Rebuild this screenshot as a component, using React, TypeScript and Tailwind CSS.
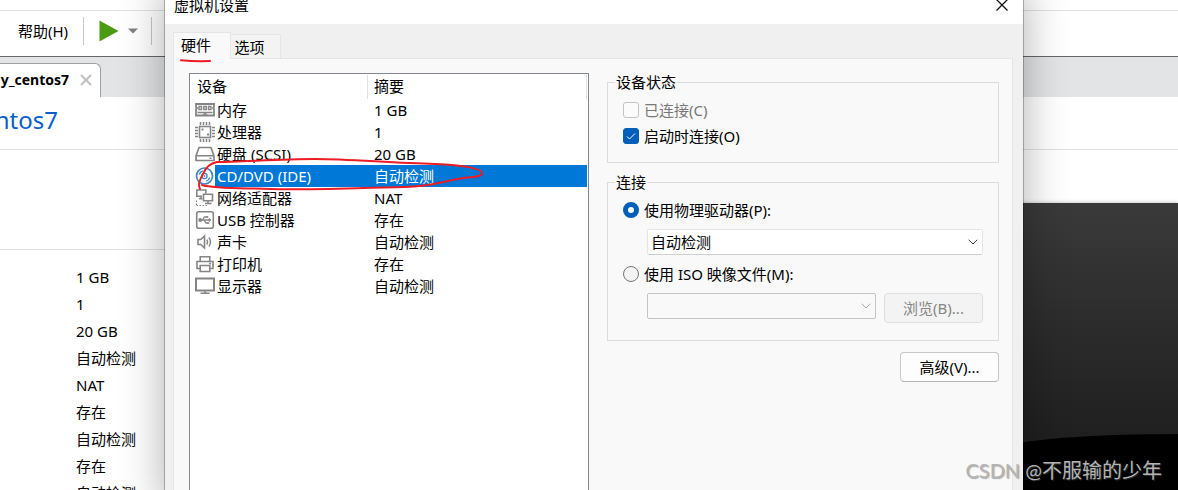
import React, { useState } from "react";
import { ChevronDown, X } from "lucide-react";

type Device = { name: string; summary: string; icon: React.ReactNode };

function Icon({ children, color = "#858585" }: { children: React.ReactNode; color?: string }) {
  return (
    <svg viewBox="0 0 20 20" className="h-5 w-5 shrink-0" fill="none" stroke={color} strokeWidth="1.6" aria-hidden="true">
      {children}
    </svg>
  );
}

const devices: Device[] = [
  {
    name: "内存",
    summary: "1 GB",
    icon: (
      <Icon>
        <path d="M1 4h18v3l-1 1 1 1v6.500H1V9l1-1-1-1z" strokeWidth="1.8" />
        <path d="M4 6.500h2.500v3H4zM8.800 6.500h2.500v3H8.800zM13.500 6.500H16v3h-2.500z" strokeWidth="1.400" />
        <path d="M2.500 12.500h15M8 15l2-1.500 2 1.500" strokeWidth="1.400" />
      </Icon>
    ),
  },
  {
    name: "处理器",
    summary: "1",
    icon: (
      <Icon>
        <rect x="4.500" y="4.500" width="11" height="11" />
        <path d="M5.500 0v3M8.500 0v3M11.500 0v3M14.500 0v3M5.500 17v3M8.500 17v3M11.500 17v3M14.500 17v3M0 5.500h3M0 8.500h3M0 11.500h3M0 14.500h3M17 5.500h3M17 8.500h3M17 11.500h3M17 14.500h3" strokeWidth="1.500" />
        <path d="M6.500 7.500h2M12 12.500h2" strokeWidth="2" />
      </Icon>
    ),
  },
  {
    name: "硬盘 (SCSI)",
    summary: "20 GB",
    icon: (
      <Icon>
        <path d="M4 3.500h12l3 8.500v4.500H1V12z" strokeLinejoin="round" strokeWidth="1.700" />
        <path d="M1 11.800h18M14.500 14.200h2" />
      </Icon>
    ),
  },
  {
    name: "CD/DVD (IDE)",
    summary: "自动检测",
    icon: (
      <Icon color="#3f87c0">
        <circle cx="9.500" cy="10" r="8" strokeWidth="1.700" />
        <circle cx="9.500" cy="10" r="2.600" strokeWidth="1.300" />
        <circle cx="9.500" cy="10" r=".5" fill="#3f87c0" strokeWidth="1" />
        <path d="M4.300 8.500a5.500 5.500 0 0 1 3.500-3.600M11.200 15.200a5.500 5.500 0 0 0 3.500-3.600" strokeWidth="1.400" />
      </Icon>
    ),
  },
  {
    name: "网络适配器",
    summary: "NAT",
    icon: (
      <Icon>
        <path d="M7 8.300H1.800V2h9v3.500M4 10.800h3.500M6 8.300v2.500" />
        <path d="M8.500 6.300h9v6.500h-9zM13 12.800v2.700M10 15.500h6.500" />
        <path d="M1.500 12.500v5.500M1.500 17.500h11" strokeDasharray="1.500 1.500" strokeWidth="1.200" />
      </Icon>
    ),
  },
  {
    name: "USB 控制器",
    summary: "存在",
    icon: (
      <Icon>
        <rect x="1.700" y="1.700" width="16.600" height="16.600" rx="2" />
        <path d="M5.500 10h9M7.500 10l2-3H12M9 10l2 3h2" strokeWidth="1.300" />
        <circle cx="5.200" cy="10" r="1.100" fill="#858585" />
        <path d="M14 8.500 16 10l-2 1.500zM11.500 6.500h1.500v1h-1.500zM12.500 12.500H14v1h-1.500z" fill="#858585" strokeWidth=".7" />
      </Icon>
    ),
  },
  {
    name: "声卡",
    summary: "自动检测",
    icon: (
      <Icon>
        <path d="M3 7.500h2.800L9.500 4v12l-3.700-3.500H3z" />
        <path d="M11.800 7.500q1.600 2.500 0 5M14 5.500q3 4.500 0 9" strokeWidth="1.400" />
      </Icon>
    ),
  },
  {
    name: "打印机",
    summary: "存在",
    icon: (
      <Icon>
        <path d="M5.200 7.500V2.800h9.600v4.700M5.200 14.500H2v-7h16v7h-3.200" />
        <path d="M5.200 11.500h9.600v6H5.200zM14 9.500h2" />
      </Icon>
    ),
  },
  {
    name: "显示器",
    summary: "自动检测",
    icon: (
      <Icon>
        <path d="M1 2.500h18v12H1z" strokeWidth="2" />
        <path d="M10 14.500V17M5.500 17.200h9" />
      </Icon>
    ),
  },
];

function MainWindow() {
  return (
    <div className="flex h-full flex-col bg-white">
      <div className="h-[11px] shrink-0 border-b border-[#e1e1e1]" />
      <div className="flex h-[46px] shrink-0 items-center border-b border-[#666] pb-1.5">
        <button type="button" className="ml-[18px] text-[15px] leading-5">帮助(H)</button>
        <div className="ml-[15px] h-7 w-px bg-[#c8c8c8]" />
        <button type="button" aria-label="启动" className="ml-[15px]">
          <svg viewBox="0 0 20 22" className="h-[22px] w-5"><path d="M.5.500 19.500 11 .5 21.500z" fill="#4b9a14" /></svg>
        </button>
        <button type="button" aria-label="电源选项" className="ml-[9px]">
          <svg viewBox="0 0 10 6" className="h-1.5 w-2.5"><path d="M0 .5h10L5 5.500z" fill="#808080" /></svg>
        </button>
        <div className="ml-[13px] h-7 w-px bg-[#c8c8c8]" />
      </div>
      <div className="flex h-10 shrink-0 items-end bg-[#e3e4e6]">
        <div className="flex h-[34px] w-[101px] items-center rounded-tr-md border-r border-t border-[#a0a0a0] bg-white pb-0.5">
          <div className="flex w-[69px] justify-end whitespace-nowrap text-sm font-bold leading-5">y_centos7</div>
          <button type="button" aria-label="关闭标签" className="ml-2 text-[#c0c0c0]">
            <X size={18} strokeWidth={2.5} />
          </button>
        </div>
      </div>
      <div className="flex h-[53px] shrink-0 items-center border-b border-[#e1e1e1] pb-1.5">
        <h1 className="flex w-[58px] justify-end whitespace-nowrap text-2xl leading-8 text-[#0b5fcb]">ntos7</h1>
      </div>
      <div className="flex min-h-0 flex-1">
        <div className="min-w-0 flex-1">
          <div className="h-[100px] border-b border-[#e1e1e1]" />
          <ul className="pl-[76px] pt-3.5 text-[15px] leading-[27px]">
            {devices.map((d) => (
              <li key={d.name}>{d.summary}</li>
            ))}
          </ul>
        </div>
        <div className="w-[200px] pt-[53px]">
          <div className="h-full bg-linear-to-b from-[#3a3a3a] to-[#1a1a1a] shadow-[0_0_4px_rgba(0,0,0,0.3)]">
            <svg viewBox="0 0 200 287" preserveAspectRatio="none" className="h-full w-full" aria-hidden="true">
              <path d="M0 247Q70 231 200 231V287H0z" fill="#000" />
            </svg>
          </div>
        </div>
      </div>
    </div>
  );
}

function DeviceTable() {
  return (
    <div className="w-[400px] shrink-0 border border-b-0 border-[#828790] bg-white pr-px">
      <table className="w-full table-fixed border-collapse text-left text-[15px] leading-[22px]">
        <thead>
          <tr>
            <th className="w-[178px] p-0 pt-px font-normal"><div className="h-6 border-r border-[#e0e0e0] pl-[7px]">设备</div></th>
            <th className="p-0 pt-px font-normal"><div className="h-6 border-r border-[#e0e0e0] pl-1.5">摘要</div></th>
          </tr>
        </thead>
        <tbody>
          {devices.map((d) => {
            const selected = d.name.startsWith("CD");
            return (
              <tr key={d.name} aria-selected={selected} className={selected ? "text-white" : "text-black"}>
                <td className="p-0">
                  <div className="flex h-[22px] items-center pl-[5px]">
                    {d.icon}
                    <span className={selected ? "h-[22px] flex-1 bg-[#0078d7] pl-0.5" : "h-[22px] flex-1 pl-0.5"}>{d.name}</span>
                  </div>
                </td>
                <td className={selected ? "bg-[#0078d7] p-0 pl-1.5" : "p-0 pl-1.5"}>{d.summary}</td>
              </tr>
            );
          })}
        </tbody>
      </table>
    </div>
  );
}

function Radio({ label, checked, onChange }: { label: string; checked: boolean; onChange: () => void }) {
  return (
    <label className="flex h-[26px] items-center gap-[5px]">
      <input
        type="radio"
        name="connection"
        checked={checked}
        onChange={onChange}
        className="h-4 w-4 appearance-none rounded-full border border-[#767676] bg-[#f3f3f3] checked:border-[5px] checked:border-[#005fb8] checked:bg-white"
      />
      {label}
    </label>
  );
}

function Check({ label, checked, disabled, onChange }: { label: string; checked: boolean; disabled?: boolean; onChange?: () => void }) {
  return (
    <label className={disabled ? "flex h-[26px] items-center gap-[5px] text-[#777]" : "flex h-[26px] items-center gap-[5px]"}>
      <span className="grid">
        <input
          type="checkbox"
          checked={checked}
          disabled={disabled}
          onChange={onChange}
          readOnly={!onChange}
          className="col-start-1 row-start-1 h-4 w-4 appearance-none rounded-[3px] border border-[#c3c3c3] bg-[#fbfbfb] checked:border-[#005fb8] checked:bg-[#005fb8]"
        />
        {checked && (
          <svg viewBox="0 0 16 16" className="pointer-events-none col-start-1 row-start-1 h-4 w-4" fill="none" stroke="#fff" aria-hidden="true">
            <path d="m4 8.500 2.500 2.500L12 5.500" />
          </svg>
        )}
      </span>
      {label}
    </label>
  );
}

function Settings() {
  const [physical, setPhysical] = useState(true);
  const [onStart, setOnStart] = useState(true);
  return (
    <div className="-mt-px flex min-w-0 flex-1 flex-col text-[15px] leading-5">
      <fieldset className="border border-[#dcdcdc] px-[15px] pb-[13px] pt-[5px]">
        <legend className="-ml-2 px-px">设备状态</legend>
        <Check label="已连接(C)" checked={false} disabled />
        <Check label="启动时连接(O)" checked={onStart} onChange={() => setOnStart(!onStart)} />
      </fieldset>
      <fieldset className="mt-[9px] border border-[#dcdcdc] px-[15px] pb-[17px] pt-[5px]">
        <legend className="-ml-2 px-px">连接</legend>
        <Radio label="使用物理驱动器(P):" checked={physical} onChange={() => setPhysical(true)} />
        <div className="ml-6 mt-1.5 grid items-center">
          <select aria-label="物理驱动器" className="col-start-1 row-start-1 h-[26px] w-full appearance-none rounded-xs border border-[#e5e5e5] border-b-[#cfcfcf] bg-white pl-[3px]">
            <option>自动检测</option>
          </select>
          <ChevronDown size={16} strokeWidth={1.5} className="pointer-events-none col-start-1 row-start-1 mr-0.5 justify-self-end text-[#444]" />
        </div>
        <div className="mt-1.5">
          <Radio label="使用 ISO 映像文件(M):" checked={!physical} onChange={() => setPhysical(false)} />
        </div>
        <div className="ml-6 mt-1.5 flex gap-2">
          <div className="grid h-[26px] flex-1 items-center">
            <select aria-label="ISO 映像文件" disabled={physical} className="col-start-1 row-start-1 h-[26px] w-full appearance-none rounded-xs border border-[#c4c4c4] bg-[#f9f9f9]" />
            <ChevronDown size={16} strokeWidth={1.5} className="pointer-events-none col-start-1 row-start-1 mr-0.5 justify-self-end text-[#aaa]" />
          </div>
          <button type="button" disabled={physical} className="h-[30px] w-[99px] rounded border border-[#dedede] bg-[#f3f3f3] text-[#858585]">浏览(B)...</button>
        </div>
      </fieldset>
      <button type="button" className="mt-[11px] h-[30px] w-[99px] self-end rounded border border-[#c8c8c8] border-b-[#b4b4b4] bg-[#fdfdfd]">高级(V)...</button>
    </div>
  );
}

function Dialog() {
  return (
    <div role="dialog" aria-label="虚拟机设置" className="absolute -bottom-5 -top-3.5 left-[165px] right-[155px] flex flex-col bg-[#f0f0f0] shadow-[0_0_0_1px_rgba(0,0,0,0.25),0_0_42px_rgba(0,0,0,0.32)]">
      <div className="flex h-[38px] shrink-0 items-center justify-between bg-white pl-[9px] pr-3.5">
        <h2 className="text-[15px] leading-5">虚拟机设置</h2>
        <button type="button" aria-label="关闭">
          <svg viewBox="0 0 14 14" className="h-3.5 w-3.5" fill="none" stroke="#111" strokeWidth="1.300"><path d="m1.500 1.500 11 11M12.500 1.500l-11 11" /></svg>
        </button>
      </div>
      <div role="tablist" className="mt-2 flex shrink-0 items-end pl-2 text-[15px] leading-5">
        <button type="button" role="tab" aria-selected="true" className="z-10 -mb-px h-[27px] w-[58px] border border-b-0 border-[#e5e5e5] bg-[#f9f9f9] pb-0.5 pr-3">硬件</button>
        <button type="button" role="tab" aria-selected="false" className="h-6 w-[50px] border border-b-0 border-l-0 border-[#e5e5e5] bg-[#f3f3f3] pr-3">选项</button>
      </div>
      <div role="tabpanel" className="ml-2 mr-2.5 flex flex-1 gap-[18px] border border-[#e5e5e5] bg-[#f9f9f9] pl-[15px] pr-[13px] pt-3.5">
        <DeviceTable />
        <Settings />
      </div>
    </div>
  );
}

export default function App() {
  return (
    <div className="relative h-screen overflow-hidden font-['Noto_Sans','Noto_Sans_CJK_SC',sans-serif] text-black">
      <MainWindow />
      <Dialog />
      <svg viewBox="0 0 330 140" className="pointer-events-none absolute left-[170px] top-[55px] h-[140px] w-[330px]" fill="none" stroke="#ed1c24" strokeWidth="2" strokeLinecap="round" aria-hidden="true">
        <path d="M11 5.300q14 1.200 29 .7" />
        <path d="M47 107C70 107 110 104 145 104S220 108 265 109C295 110 312 114 312 118S303 122 293 123C270 127 262 131 235 132C180 133 140 135 100 134C75 133 45 134 32 130" />
        <path d="M47 107Q37 109 33 119 27 129 30 134" />
      </svg>
      <div className="pointer-events-none absolute bottom-1.5 right-4 font-['Lato','Noto_Sans_CJK_SC',sans-serif] text-xl leading-7 text-[#b4b4b4] [text-shadow:1px_1px_1px_rgba(90,90,90,0.5)]">CSDN @不服输的少年</div>
    </div>
  );
}
